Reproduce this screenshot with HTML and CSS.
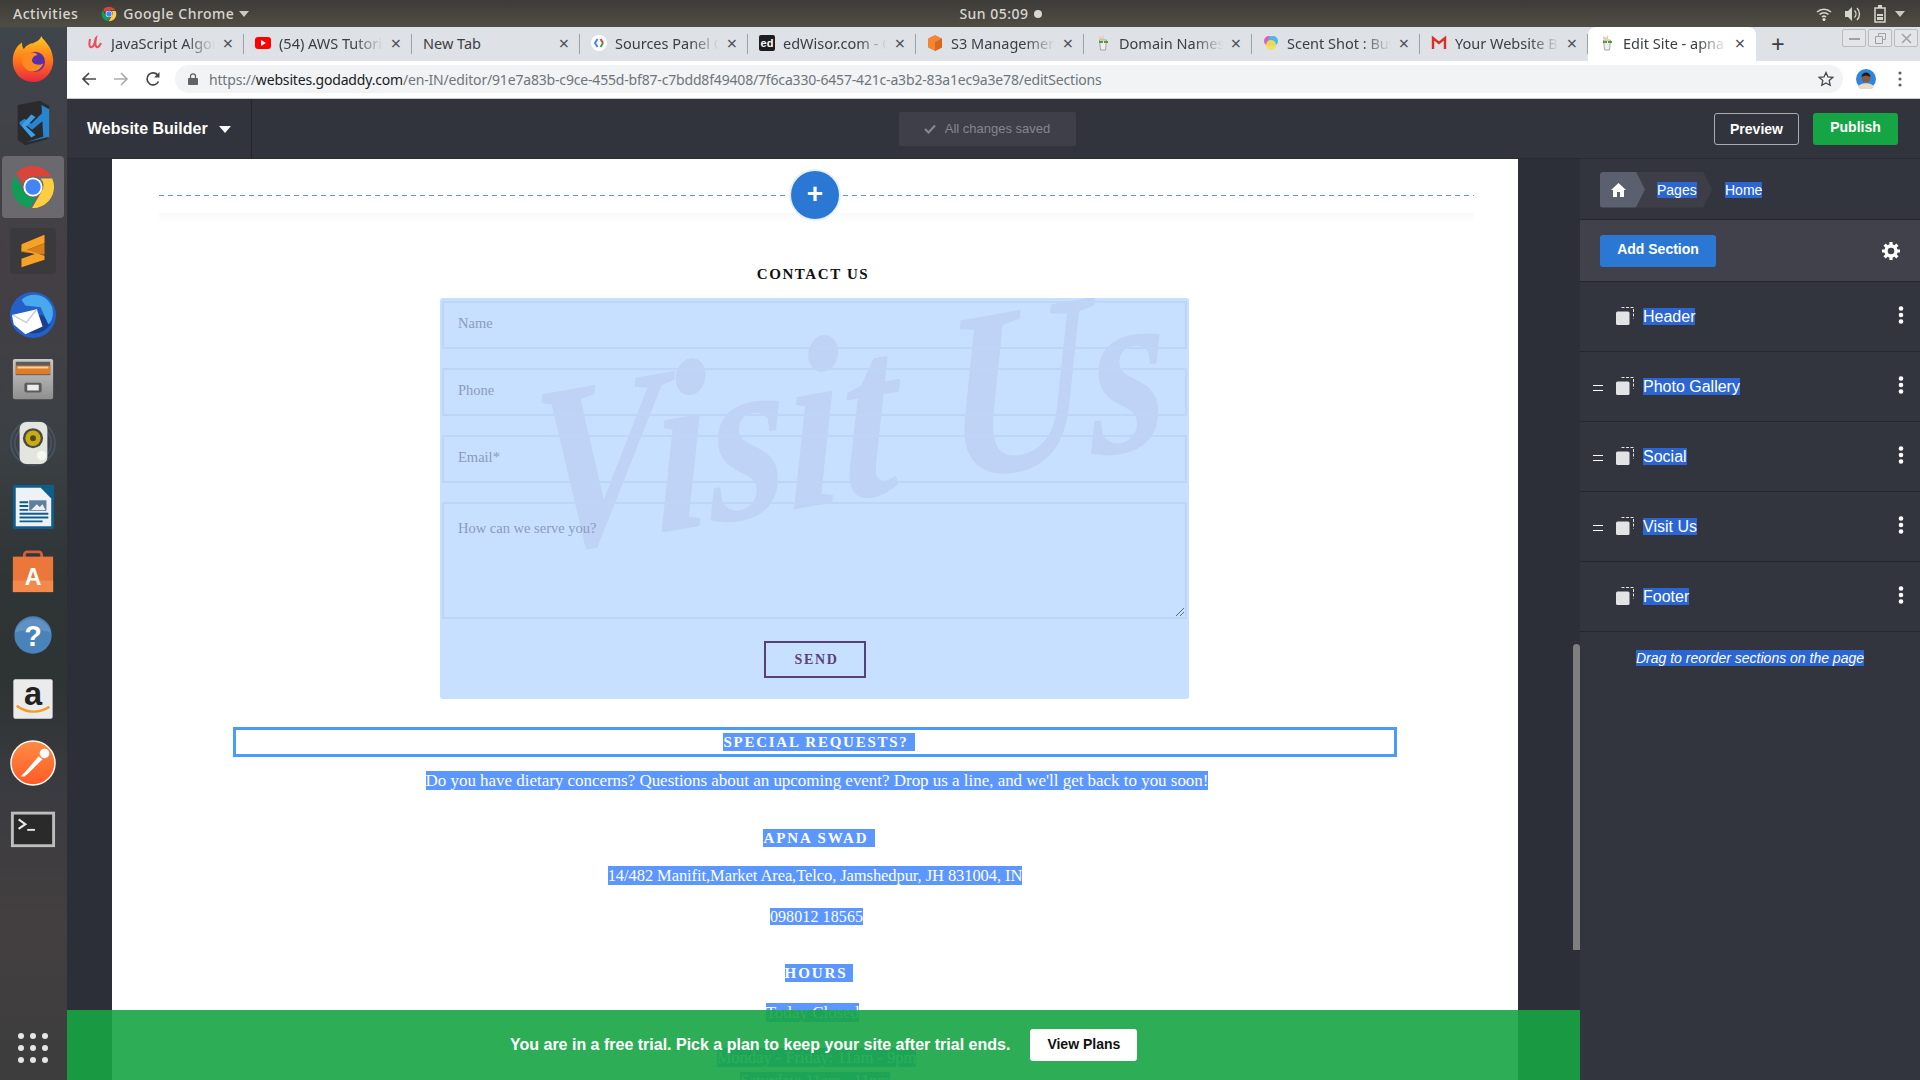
FILE: index.html
```html
<!DOCTYPE html>
<html lang="en">
<head>
<meta charset="utf-8">
<title>Edit Site - apna swad</title>
<link rel="stylesheet" href="styles.css">
</head>
<body>
<svg class="defs" width="0" height="0">
  <symbol id="chrome" viewBox="0 0 48 48">
    <path fill="#db4437" d="M24 2a22 22 0 0 1 19 11H24a11 11 0 0 0-10.500 7.700L6.500 9.500A22 22 0 0 1 24 2z"/>
    <path fill="#0f9d58" d="M5.200 12.400l9.500 16.500a11 11 0 0 0 12.500 5.600L20.500 45.800A22 22 0 0 1 5.200 12.400z"/>
    <path fill="#ffcd40" d="M44 15a22 22 0 0 1-21 31l9.700-16.800A11 11 0 0 0 32 15z"/>
    <circle cx="24" cy="24" r="10" fill="#fff"/><circle cx="24" cy="24" r="8" fill="#4285f4"/>
  </symbol>
  <symbol id="godaddy" viewBox="0 0 16 16">
    <path fill="#f3c9a0" d="M4 0l1 3 1-2 1 2 2-3 0 4H4z"/>
    <path fill="#eee" stroke="#888" stroke-width=".7" d="M4.500 5h7l-1 10h-5z"/>
    <path fill="#5b9a2c" d="M4 6h4v2H4zm5 0h4v2H9z"/>
  </symbol>
  <symbol id="copy" viewBox="0 0 18 18">
    <path fill="none" stroke="#e2e3e5" stroke-width="1" stroke-dasharray="3 1.500" d="M5.500.500h12v11"/>
    <rect x="0" y="4.500" width="13.500" height="13.500" rx="1.500" fill="#e2e3e5"/>
  </symbol>
  <symbol id="kebab" viewBox="0 0 6 18">
    <circle cx="3" cy="2.500" r="2.300" fill="#fff"/><circle cx="3" cy="9" r="2.300" fill="#fff"/><circle cx="3" cy="15.500" r="2.300" fill="#fff"/>
  </symbol>
</svg>

<header class="topbar">
  <div class="topbar-left">
    <span>Activities</span>
    <span class="app-name"><svg class="app-icon"><use href="#chrome"/></svg>Google Chrome<i class="caret caret-grey app-caret"></i></span>
  </div>
  <div class="clock">Sun 05:09<i class="clock-dot"></i></div>
  <div class="tray">
    <svg width="16" height="16" viewBox="0 0 16 16"><path fill="none" stroke="#d6d4cf" stroke-width="1.500" d="M1 6a10 10 0 0 1 14 0M3.500 8.500a6.500 6.500 0 0 1 9 0M6 11a3 3 0 0 1 4 0"/><circle cx="8" cy="13.500" r="1.500" fill="#e8e6e2"/></svg>
    <svg width="18" height="16" viewBox="0 0 18 16"><path fill="#d6d4cf" d="M1 5h3l4-4v14l-4-4H1z"/><path fill="none" stroke="#d6d4cf" stroke-width="1.400" d="M10.500 4.500a5 5 0 0 1 0 7M13 2a8.500 8.500 0 0 1 0 12"/></svg>
    <svg width="12" height="18" viewBox="0 0 12 18"><path fill="none" stroke="#d6d4cf" stroke-width="1.500" d="M1 3h10v14H1z"/><path fill="#d6d4cf" d="M4 0h4v3H4zM3 9h6v2H3zm0 3h6v3H3z"/></svg>
    <i class="caret caret-grey tray-caret"></i>
  </div>
</header>

<div class="desktop">
  <nav class="dock">
    <svg class="dock-icon" viewBox="0 2 48 50"><defs><linearGradient id="ff" x1="0" y1="0" x2="0" y2="1"><stop offset="0" stop-color="#ffcb1f"/><stop offset=".5" stop-color="#ff7a1a"/><stop offset="1" stop-color="#e8273f"/></linearGradient></defs><path fill="url(#ff)" d="M33 2c2 5 12 10 13 26 0 14-10 24-22 24S2 43 2 29c0-10 5-17 10-20 0 4 1 6 2 7 3-4 7-6 10-6 3-2 8-3 9-8z"/><circle cx="26" cy="30" r="11" fill="#5a2ea6"/><path fill="#ff8a1f" d="M14 22c6-4 14-2 15 1-4 0-6 3-6 6s6 6 12 3c-2 7-10 11-17 7-6-4-8-12-4-17z"/></svg>
    <svg class="dock-icon" viewBox="0 0 48 54"><path fill="#2b2b2d" d="M6 6l26-5 11 6-2 39-26 7-9-6z"/><path fill="#2684d0" d="M34 6l9 5v32l-28 7 21-7zM8 26l6-4 8 6 14-14v10l-13 11-9-7-5 2z"/><path fill="#3aa0e8" d="M10 30l12-13 5 3-11 11 11 10-5 3z"/></svg>
    <div class="dock-active"><svg class="dock-icon"><use href="#chrome"/></svg></div>
    <svg class="dock-icon" viewBox="0 0 48 48"><rect width="48" height="48" rx="4" fill="#3a3a3c"/><path fill="#f7a125" d="M36 7v9L12 25v-8z"/><path fill="#d8801a" d="M12 25l24-9v12z"/><path fill="#f7a125" d="M12 21l24 8v4L12 41v-9l14-5-14-4z"/></svg>
    <svg class="dock-icon" viewBox="0 0 48 48"><circle cx="24" cy="24" r="24" fill="#2360c8"/><path fill="#1a3f8f" d="M4 30c8 16 28 18 38 4l-8-10z"/><path fill="#49a9ee" d="M12 8c8-8 26-8 32 8 2 8 0 14-4 18L32 16l-16-2z"/><path fill="#fff" d="M2 24l26-6 6 18-18 8L4 34z"/><path fill="none" stroke="#c5cbd6" stroke-width="1.500" d="M3 24l14 8 11-14"/></svg>
    <svg class="dock-icon" viewBox="0 0 48 48"><defs><linearGradient id="fl" x1="0" y1="0" x2="0" y2="1"><stop offset="0" stop-color="#c9c9c9"/><stop offset="1" stop-color="#8f8f8f"/></linearGradient></defs><rect x="3" y="3" width="42" height="42" rx="2" fill="url(#fl)"/><rect x="6" y="6" width="36" height="14" fill="#5c5c5c"/><rect x="6" y="10" width="36" height="9" fill="#e07b28"/><rect x="8" y="11" width="32" height="2" fill="#f4d7a8"/><rect x="15" y="28" width="18" height="10" rx="2" fill="#5b5b5b"/><rect x="18" y="30" width="12" height="6" fill="#ececec"/></svg>
    <svg class="dock-icon" viewBox="0 0 48 48"><circle cx="24" cy="24" r="23" fill="none" stroke="#54708c" stroke-width="2" opacity=".4"/><circle cx="24" cy="24" r="19" fill="none" stroke="#54708c" stroke-width="2" opacity=".4"/><rect x="10" y="2" width="29" height="44" rx="7" fill="#e5e5df"/><circle cx="24" cy="19" r="10.500" fill="#4a4a44"/><circle cx="24" cy="19" r="8" fill="#c9ab12"/><circle cx="24" cy="19" r="3" fill="#4f4a1b"/><circle cx="33" cy="37" r="5" fill="#f6f6f3"/></svg>
    <svg class="dock-icon" viewBox="0 0 48 48"><path fill="#0f5d8d" d="M5 1h28l13 13v31a2 2 0 0 1-2 2H5a2 2 0 0 1-2-2V3a2 2 0 0 1 2-2z"/><path fill="#eef2f6" d="M6 4h26l11 11v29H6z"/><path fill="#0f5d8d" d="M32 1h14v13h-3zM10 18h9v2h-9zm0 4h9v2h-9zm0 4h9v2h-9zm0 4h30v2H10zm0 4h30v2H10zm0 4h24v2H10z"/><rect x="20" y="17" width="18" height="11" fill="#5f7f9f"/><path fill="#eee" d="M22 27l6-6 3 3 3-3 3 6z"/></svg>
    <svg class="dock-icon" viewBox="0 0 48 48"><path fill="none" stroke="#d0603a" stroke-width="3" d="M15 13V7a3 3 0 0 1 3-3h12a3 3 0 0 1 3 3v6"/><rect x="3" y="9" width="42" height="37" fill="#ec773b"/><rect x="3" y="34" width="42" height="12" fill="#f38a4c"/><text class="bag-a" x="24" y="39" text-anchor="middle">A</text></svg>
    <svg class="dock-icon" viewBox="0 0 48 48"><circle cx="24" cy="24" r="19.500" fill="#4a82ba"/><path fill="#fff" opacity=".12" d="M5 22a19.500 19.500 0 0 1 38 0c-10-5-28-5-38 0z"/><text class="help-q" x="24" y="35" text-anchor="middle">?</text></svg>
    <svg class="dock-icon" viewBox="0 0 48 48"><rect x="3.500" y="3.500" width="41" height="41" rx="2" fill="#ebebeb"/><text class="amz-a" x="24" y="30" text-anchor="middle">a</text><path fill="none" stroke="#f39a1f" stroke-width="2.500" d="M7 31c10 8 24 8 34 1"/></svg>
    <svg class="dock-icon" viewBox="0 0 48 48"><defs><linearGradient id="pm" x1="0" y1="0" x2="0" y2="1"><stop offset="0" stop-color="#ff8c42"/><stop offset="1" stop-color="#ff5a26"/></linearGradient></defs><circle cx="24" cy="24" r="23" fill="url(#pm)" stroke="#fff" stroke-width="1.500"/><path fill="#fff" d="M11 38l5-5 14-16 4 3-15 15-4 3zM32 11a5 5 0 1 1 4 8 5 5 0 0 1-4-8z"/></svg>
    <svg class="dock-icon" viewBox="0 -7 48 48"><rect x="1" y="1" width="46" height="37" fill="#bdbdbd"/><rect x="4" y="4" width="40" height="31" fill="#2a2a2a"/><path fill="none" stroke="#e8e8e8" stroke-width="2.200" d="M9 9l7 5-7 5"/><rect x="18" y="19" width="8" height="2" fill="#e8e8e8"/></svg>
    <div class="dock-grid"><i></i><i></i><i></i><i></i><i></i><i></i><i></i><i></i><i></i></div>
  </nav>

  <div class="browser">
    <div class="tabstrip">
      <div class="tab"><svg class="fav" viewBox="0 0 16 16"><path fill="none" stroke="#e8505b" stroke-width="2" d="M3 4c-1 5-1 9 2 8s3-8 4-9c-1 5-1 10 2 9 1 0 2-2 3-4"/></svg><span class="tab-title">JavaScript Algorithms</span><span class="tab-x">×</span></div>
      <div class="tab"><svg class="fav" viewBox="0 0 16 16"><rect y="2" width="16" height="12" rx="3" fill="#f00"/><path fill="#fff" d="M6 5l5 3-5 3z"/></svg><span class="tab-title">(54) AWS Tutorial</span><span class="tab-x">×</span></div>
      <div class="tab"><span class="tab-title tab-title-full">New Tab</span><span class="tab-x">×</span></div>
      <div class="tab"><svg class="fav" viewBox="0 0 16 16"><circle cx="8" cy="8" r="8" fill="#fff"/><path fill="none" stroke="#4285f4" stroke-width="2" d="M6.500 4L4 8l2.500 4"/><path fill="none" stroke="#ea4335" stroke-width="2" d="M9.500 4L12 8"/><path fill="none" stroke="#34a853" stroke-width="2" d="M12 8l-2.500 4"/></svg><span class="tab-title">Sources Panel Overview</span><span class="tab-x">×</span></div>
      <div class="tab"><svg class="fav" viewBox="0 0 16 16"><rect width="16" height="16" rx="2" fill="#1d1d1f"/><text class="fav-ed" x="8" y="12" text-anchor="middle">ed</text></svg><span class="tab-title">edWisor.com - Online</span><span class="tab-x">×</span></div>
      <div class="tab"><svg class="fav" viewBox="0 0 16 16"><path fill="#f58536" d="M8 0l7 3.500v9L8 16l-7-3.500v-9z"/><path fill="#d9681d" d="M8 7l7-3.500v9L8 16z"/></svg><span class="tab-title">S3 Management Console</span><span class="tab-x">×</span></div>
      <div class="tab"><svg class="fav"><use href="#godaddy"/></svg><span class="tab-title">Domain Names, Websites</span><span class="tab-x">×</span></div>
      <div class="tab"><svg class="fav" viewBox="0 0 16 16"><circle cx="6" cy="6" r="5" fill="#e05cc0"/><circle cx="10" cy="6" r="5" fill="#4db8e8"/><circle cx="8" cy="10" r="5" fill="#f5e04a" opacity=".9"/></svg><span class="tab-title">Scent Shot : Buy Perfume</span><span class="tab-x">×</span></div>
      <div class="tab"><svg class="fav" viewBox="0 0 16 16"><path fill="none" stroke="#d93025" stroke-width="2.400" d="M2 14V3l6 5 6-5v11"/></svg><span class="tab-title">Your Website Builder</span><span class="tab-x">×</span></div>
      <div class="tab tab-active"><svg class="fav"><use href="#godaddy"/></svg><span class="tab-title">Edit Site - apna swad</span><span class="tab-x">×</span></div>
      <span class="tab-new">+</span>
      <div class="winbtns">
        <span class="winbtn"><i class="win-min"></i></span>
        <span class="winbtn"><svg width="11" height="11" viewBox="0 0 11 11"><path fill="none" stroke="#9ea2a8" d="M3.500 3V.5h7v6H8M.5 3.500h7v7h-7z"/></svg></span>
        <span class="winbtn"><svg width="11" height="11" viewBox="0 0 11 11"><path stroke="#9ea2a8" stroke-width="1.500" d="M1 1l9 9M10 1l-9 9"/></svg></span>
      </div>
    </div>

    <div class="toolbar">
      <svg class="nav-icon" viewBox="0 0 16 16"><path fill="none" stroke="#45484d" stroke-width="1.700" d="M15 8H2M8 2L2 8l6 6"/></svg>
      <svg class="nav-icon" viewBox="0 0 16 16"><path fill="none" stroke="#a9acb1" stroke-width="1.700" d="M1 8h13M8 2l6 6-6 6"/></svg>
      <svg class="nav-icon" viewBox="0 0 16 16"><path fill="none" stroke="#45484d" stroke-width="1.700" d="M13.500 10.500A6 6 0 1 1 13 4.500"/><path fill="#45484d" d="M14.500 1v5.500H9z"/></svg>
      <div class="omnibox">
        <svg class="lock" viewBox="0 0 10 12"><path fill="none" stroke="#5f6368" stroke-width="1.300" d="M2.500 5V3.300a2.500 2.500 0 0 1 5 0V5"/><rect y="5" width="10" height="7" rx="1" fill="#5f6368"/></svg>
        <span class="url"><span class="url-dim">https://</span>websites.godaddy.com<span class="url-dim">/en-IN/editor/91e7a83b-c9ce-455d-bf87-c7bdd8f49408/7f6ca330-6457-421c-a3b2-83a1ec9a3e78/editSections</span></span>
        <svg class="star" viewBox="0 0 16 16"><path fill="none" stroke="#45484d" stroke-width="1.300" d="M8 1.500l2 4.400 4.800.5-3.600 3.200 1 4.700L8 11.900l-4.200 2.400 1-4.700L1.200 6.400 6 5.900z"/></svg>
      </div>
      <svg class="avatar" viewBox="0 0 20 20"><circle cx="10" cy="10" r="10" fill="#2f86e0"/><path fill="#e9dcc6" d="M2 18c2-5 14-5 16 0a10 10 0 0 1-16 0z"/><circle cx="10" cy="9" r="4.500" fill="#8a5a3c"/><path fill="#1c1c1c" d="M5.500 8c0-6 9-6 9 0-3-2-6-2-9 0z"/></svg>
      <svg class="kebab-dark" viewBox="0 0 4 16"><circle cx="2" cy="2" r="1.600" fill="#5f6368"/><circle cx="2" cy="8" r="1.600" fill="#5f6368"/><circle cx="2" cy="14" r="1.600" fill="#5f6368"/></svg>
    </div>

    <div class="editor-bar">
      <div class="brand">Website Builder<i class="caret caret-white"></i></div>
      <div class="saved"><svg width="12" height="10" viewBox="0 0 12 10"><path fill="none" stroke="#85858d" stroke-width="2.200" d="M1 5l3.500 3.500L11 1.500"/></svg>All changes saved</div>
      <div class="editor-actions">
        <button class="btn-preview">Preview</button>
        <button class="btn-publish">Publish</button>
      </div>
    </div>

    <div class="workspace">
      <div class="stage">
        <main class="page">
          <div class="add-row">
            <div class="add-line"></div>
            <div class="add-shade"></div>
            <span class="add-btn">+</span>
          </div>
          <h2 class="contact-title">CONTACT US</h2>
          <div class="form-wrap">
            <div class="watermark">Visit Us</div>
            <div class="field">Name</div>
            <div class="field">Phone</div>
            <div class="field">Email*</div>
            <div class="field field-area">How can we serve you?<svg class="resize" width="9" height="9" viewBox="0 0 9 9"><path stroke="#5a6a84" d="M1 9l8-8M5 9l4-4"/></svg></div>
            <div class="send-row"><span class="send">SEND</span></div>
          </div>
          <div class="special"><span class="sel sel-head sel-special">SPECIAL REQUESTS?</span></div>
          <p class="line line-intro"><span class="sel">Do you have dietary concerns? Questions about an upcoming event? Drop us a line, and we'll get back to you soon!</span></p>
          <p class="line line-apna"><span class="sel sel-head">APNA SWAD</span></p>
          <p class="line line-addr"><span class="sel">14/482 Manifit,Market Area,Telco, Jamshedpur, JH 831004, IN</span></p>
          <p class="line line-phone"><span class="sel">098012 18565</span></p>
          <p class="line line-hours"><span class="sel sel-head">HOURS</span></p>
          <p class="line line-today"><span class="sel">Today Closed</span></p>
          <p class="line line-mon"><span class="sel">Monday - Friday: 11am - 9pm</span></p>
          <p class="line line-sat"><span class="sel">Saturday: 11am - 11pm</span></p>
        </main>
        <div class="scrollbar"></div>
        <div class="trial">
          <span class="trial-text">You are in a free trial. Pick a plan to keep your site after trial ends.</span>
          <button class="btn-plans">View Plans</button>
        </div>
      </div>

      <aside class="panel">
        <div class="crumbs">
          <span class="crumb-home"><svg width="15" height="14" viewBox="0 0 15 14"><path fill="#fff" d="M7.500 0L15 7h-2v7H9V9H6v5H2V7H0z"/></svg></span>
          <span class="crumb-pages"><span class="sel-dark">Pages</span></span>
          <span class="crumb-current sel-dark">Home</span>
        </div>
        <div class="add-band">
          <button class="btn-add">Add Section</button>
          <svg class="gear" viewBox="0 0 18 18"><circle cx="9" cy="9" r="5" fill="none" stroke="#fff" stroke-width="3.400"/><path stroke="#fff" stroke-width="3.200" d="M9 0v4M9 14v4M0 9h4M14 9h4M2.600 2.600l2.800 2.800M12.600 12.600l2.800 2.800M15.400 2.600l-2.800 2.800M5.400 12.600l-2.800 2.800"/></svg>
        </div>
        <div class="row"><span class="grip"></span><svg class="copy"><use href="#copy"/></svg><span class="row-label"><span class="sel-dark">Header</span></span><svg class="kebab"><use href="#kebab"/></svg></div>
        <div class="row"><span class="grip grip-on"></span><svg class="copy"><use href="#copy"/></svg><span class="row-label"><span class="sel-dark">Photo Gallery</span></span><svg class="kebab"><use href="#kebab"/></svg></div>
        <div class="row"><span class="grip grip-on"></span><svg class="copy"><use href="#copy"/></svg><span class="row-label"><span class="sel-dark">Social</span></span><svg class="kebab"><use href="#kebab"/></svg></div>
        <div class="row"><span class="grip grip-on"></span><svg class="copy"><use href="#copy"/></svg><span class="row-label"><span class="sel-dark">Visit Us</span></span><svg class="kebab"><use href="#kebab"/></svg></div>
        <div class="row"><span class="grip"></span><svg class="copy"><use href="#copy"/></svg><span class="row-label"><span class="sel-dark">Footer</span></span><svg class="kebab"><use href="#kebab"/></svg></div>
        <p class="drag-hint"><span class="sel-dark">Drag to reorder sections on the page</span></p>
      </aside>
    </div>
  </div>
</div>
</body>
</html>
```

FILE: styles.css
```css
* { box-sizing: border-box; }
html, body { margin: 0; padding: 0; height: 1080px; overflow: hidden; }
body { font-family: "Liberation Sans", Arial, sans-serif; display: flex; flex-direction: column; background: #32343d; }
.defs { position: absolute; }
button { font-family: "Liberation Sans", Arial, sans-serif; cursor: pointer; }

/* Ubuntu top bar */
.topbar { height: 27px; flex: none; display: grid; grid-template-columns: 1fr auto 1fr; align-items: center; padding: 0 12px 0 13px; background: linear-gradient(#3d3b37, #504d45); color: #d8d6d0; font: 500 14px "Noto Sans", sans-serif; letter-spacing: .5px; }
.topbar-left { display: flex; align-items: center; gap: 21px; }
.app-name { display: flex; align-items: center; gap: 6px; }
.app-icon { width: 16px; height: 16px; margin-left: 2px; }
.app-caret { margin-left: -1px; }
.clock { display: flex; align-items: center; gap: 5px; padding-left: 80px; }
.clock-dot { width: 8px; height: 8px; border-radius: 50%; background: #d8d6d0; }
.tray { display: flex; align-items: center; justify-content: flex-end; gap: 12px; padding-right: 3px; }
.tray-caret { margin-left: -3px; }
.caret { display: inline-block; width: 0; height: 0; border-style: solid; border-color: transparent; border-width: 6px 5px 0; }
.caret-grey { border-top-color: #c9c7c1; }
.caret-white { border-width: 7px 6px 0; border-top-color: #fff; margin-left: 11px; }

.desktop { flex: 1; display: flex; min-height: 0; }

/* Dock */
.dock { width: 67px; flex: none; position: relative; display: flex; flex-direction: column; align-items: center; gap: 18px; padding: 9px 1px 0 0; background: linear-gradient(#3e454b 0, #443f45 22%, #3b4044 40%, #2f3436 52%, #2e3333 62%, #3a3b40 72%, #433f40 85%, #3d3d3d 100%); }
.dock-icon { width: 46px; height: 46px; flex: none; display: block; }
.dock-active { width: 62px; height: 62px; margin: -8px 0; flex: none; display: flex; align-items: center; justify-content: center; background: #6a6a6e; border-radius: 4px; }
.bag-a { font: 700 24px "Liberation Sans", sans-serif; fill: #fff; }
.help-q { font: 700 30px "Liberation Sans", sans-serif; fill: #fff; }
.amz-a { font: 700 34px "Liberation Sans", sans-serif; fill: #222; }
.dock-grid { position: absolute; left: 18px; top: 1006px; width: 30px; display: grid; grid-template-columns: repeat(3, 6px); gap: 6px; }
.dock-grid i { width: 6px; height: 6px; border-radius: 50%; background: #e6e6e6; }

.browser { flex: 1; min-width: 0; display: flex; flex-direction: column; }

/* Tabs */
.tabstrip { height: 34px; flex: none; display: flex; align-items: stretch; padding-left: 9px; background: #dee1e6; position: relative; font: 14.5px "Noto Sans", sans-serif; color: #3c4043; }
.tab { width: 168px; flex: none; display: flex; align-items: center; gap: 8px; padding: 0 11px 2px; position: relative; }
.tab::after { content: ""; position: absolute; right: 0; top: 7px; bottom: 7px; width: 1px; background: #9da0a5; }
.tab-active { background: #fff; border-radius: 8px 8px 0 0; }
.tab-active::after { display: none; }
.fav { width: 16px; height: 16px; flex: none; }
.fav-ed { font: 700 11px "Liberation Sans", sans-serif; fill: #fff; }
.tab-title { flex: 1; min-width: 0; white-space: nowrap; overflow: hidden; -webkit-mask-image: linear-gradient(90deg, #000 72%, transparent); mask-image: linear-gradient(90deg, #000 72%, transparent); }
.tab-title-full { -webkit-mask-image: none; mask-image: none; }
.tab-x { font-size: 18px; line-height: 1; color: #4a4d52; flex: none; }
.tab-new { font-size: 24px; line-height: 33px; margin-left: 15px; color: #3c4043; }
.winbtns { position: absolute; top: 2px; right: 2px; display: flex; gap: 2px; }
.winbtn { width: 24px; height: 18px; border: 1px solid #b9bcc1; border-radius: 2px; display: flex; align-items: center; justify-content: center; background: #e3e5e9; }
.win-min { width: 11px; height: 2px; background: #9ea2a8; margin-top: 2px; }

/* Toolbar */
.toolbar { height: 38px; flex: none; display: flex; align-items: center; padding: 0 18px 1px 14px; background: #fff; border-bottom: 1px solid #c4c6ca; }
.nav-icon { width: 16px; height: 16px; margin-right: 16px; flex: none; }
.nav-icon:nth-child(3) { margin-right: 14px; }
.omnibox { flex: 1; height: 28px; display: flex; align-items: center; padding: 0 9px 0 13px; background: #f1f3f4; border-radius: 14px; font: 14px "Noto Sans", sans-serif; }
.lock { width: 10px; height: 12px; margin-right: 11px; flex: none; }
.url { flex: 1; white-space: nowrap; color: #202124; letter-spacing: -.175px; }
.url-dim { color: #70757a; }
.star { width: 16px; height: 16px; flex: none; }
.avatar { width: 20px; height: 20px; margin-left: 13px; flex: none; }
.kebab-dark { width: 4px; height: 16px; margin-left: 22px; flex: none; }

/* Editor bar */
.editor-bar { height: 60px; flex: none; display: grid; grid-template-columns: 1fr auto 1fr; align-items: center; background: #32343d; color: #fff; border-bottom: 1px solid #2a2b31; }
.brand { justify-self: start; height: 100%; display: flex; align-items: center; width: 185px; padding: 1px 0 0 20px; font-weight: 700; font-size: 16px; border-right: 1px solid #24262c; }
.saved { width: 177px; height: 34px; margin: 0 8px 0 -5px; display: flex; align-items: center; justify-content: center; gap: 9px; background: #3f3f49; border-radius: 2px; color: #85858d; font-size: 13px; }
.editor-actions { justify-self: end; display: flex; gap: 14px; padding-right: 22px; }
.btn-preview, .btn-publish { width: 85px; height: 32px; border-radius: 3px; color: #fff; font-weight: 700; font-size: 14px; padding: 0; }
.btn-preview { background: transparent; border: 1px solid #a9abb1; }
.btn-publish { background: #16a544; border: 0; padding-bottom: 3px; }

/* Workspace */
.workspace { flex: 1; min-height: 0; display: flex; }
.stage { width: 1513px; flex: none; position: relative; overflow: hidden; padding-left: 45px; background: #2d2f38; }
.page { width: 1406px; height: 100%; background: #fff; overflow: hidden; font-family: "Liberation Serif", serif; display: flex; flex-direction: column; }
.add-row { height: 65px; flex: none; margin: 0 44px 0 47px; position: relative; }
.add-line { position: absolute; left: 0; right: 0; top: 36px; height: 1px; background: repeating-linear-gradient(90deg, #5f97df 0 5px, transparent 5px 9px); }
.add-btn { position: absolute; left: 632px; top: 12px; width: 48px; height: 48px; border-radius: 50%; background: #2b78d4; box-shadow: 0 0 0 2px #e6f0fa; color: #fff; font: 700 28px/46px "Liberation Sans", sans-serif; text-align: center; }
.add-shade { position: absolute; left: 0; right: 0; top: 54px; height: 11px; background: linear-gradient(#fafafa, #fff); }
.contact-title { margin: 42px 0 0; height: 17px; text-align: center; font-size: 15px; line-height: 17px; letter-spacing: 1.6px; color: #111; font-weight: 700; padding-right: 4px; }
.form-wrap { width: 749px; height: 401px; margin: 15px 0 0 328px; padding: 3px 2px 0; background: #c8e0ff; border-radius: 3px; position: relative; overflow: hidden; flex: none; }
.watermark { position: absolute; left: 95px; top: 56px; font: italic 700 240px/1 "Liberation Serif", serif; color: #bed3f5; white-space: nowrap; transform-origin: 0 201px; transform: rotate(-10deg) skewX(-8deg) scaleX(.84); }
.field { height: 48px; margin-bottom: 19px; padding: 12px 14px; border: 2px solid #bcd5f8; position: relative; color: #8b9bbd; font-size: 14.5px; line-height: 17px; }
.field-area { height: 117px; margin-bottom: 22px; padding-top: 16px; }
.resize { position: absolute; right: 1px; bottom: 1px; }
.send-row { display: flex; justify-content: center; }
.send { width: 102px; height: 37px; margin-left: 1px; padding-left: 3px; border: 2px solid #59407b; color: #59407b; font-size: 14px; font-weight: 700; letter-spacing: 1.7px; line-height: 33px; text-align: center; }
.sel { background: #5c96ff; color: #fff; padding: 0; }
.sel-head { font-weight: 700; letter-spacing: 1.9px; font-size: 15px; padding: 1px 6px 1px 0; }
.sel-special { letter-spacing: 1.75px; }
.special { height: 30px; margin: 28px 0 0 121px; width: 1164px; padding-left: 8px; flex: none; border: 3px solid #4a9bfd; text-align: center; line-height: 24px; font-size: 15px; }
.line { margin: 0; text-align: center; font-size: 17px; line-height: 19px; flex: none; color: #fff; }
.line-intro { margin-top: 14px; padding-left: 4px; letter-spacing: -.03px; }
.line-apna { margin-top: 38px; padding-left: 8px; }
.line-addr { margin-top: 18px; font-size: 16.5px; letter-spacing: -.08px; }
.line-phone { margin-top: 22px; padding-left: 3px; font-size: 16px; letter-spacing: .1px; }
.line-hours { margin-top: 37px; padding-left: 8px; }
.line-today { margin-top: 20px; padding-right: 5px; }
.line-mon { margin-top: 26px; font-size: 16.5px; padding-left: 3px; }
.line-sat { margin-top: 4px; font-size: 16px; }
.scrollbar { position: absolute; right: 0; top: 485px; width: 7px; height: 306px; background: #7f7f7f; border-radius: 4px 4px 0 0; }
.trial { position: absolute; left: 0; right: 0; bottom: 0; height: 70px; display: flex; align-items: center; padding-left: 443px; gap: 20px; background: rgba(22, 165, 68, .9); }
.trial-text { color: #fff; font-weight: 700; font-size: 16px; }
.btn-plans { width: 107px; height: 32px; border: 0; border-radius: 3px; background: #fff; color: #111; font-weight: 700; font-size: 14px; padding: 0 0 2px; }

/* Panel */
.panel { flex: 1; min-width: 0; background: #33353e; color: #fff; }
.crumbs { height: 61px; display: flex; align-items: center; padding: 1px 0 0 20px; border-bottom: 1px solid #26272d; font-size: 14px; }
.crumb-home { width: 45px; height: 36px; position: relative; z-index: 1; display: flex; align-items: center; padding-left: 11px; background: #5b606f; border-radius: 3px 0 0 3px; clip-path: polygon(0 0, 36px 0, 100% 50%, 36px 100%, 0 100%); }
.crumb-pages { width: 76px; height: 36px; margin-left: -9px; display: flex; align-items: center; padding-left: 21px; background: #3e3e48; clip-path: polygon(0 0, 67px 0, 100% 50%, 67px 100%, 0 100%, 9px 50%); }
.crumb-current { margin-left: 13px; }
.sel-dark { background: #2b66d3; color: #fff; }
.add-band { height: 62px; display: flex; align-items: center; justify-content: space-between; padding: 0 20px; background: #41414b; border-bottom: 1px solid #26272d; }
.btn-add { width: 116px; height: 32px; background: #2b78d4; border: 0; border-radius: 3px; color: #fff; font-weight: 700; font-size: 14px; padding: 0 0 3px; }
.gear { width: 18px; height: 18px; margin-right: 0; }
.row { height: 70px; display: flex; align-items: center; padding: 0 16px 0 13px; border-bottom: 1px solid #26272d; font-size: 16px; }
.grip { width: 10px; height: 6px; margin-right: 12px; flex: none; }
.grip-on { border-top: 1px solid #fff; border-bottom: 1px solid #fff; margin-top: 2px; }
.copy { width: 18px; height: 18px; margin: -1px 10px 0 1px; flex: none; }
.row-label { flex: 1; margin-left: -1px; }
.kebab { width: 6px; height: 18px; flex: none; margin-top: -3px; }
.drag-hint { margin: 18px 0 0; text-align: center; font-size: 14px; font-style: italic; }
```
